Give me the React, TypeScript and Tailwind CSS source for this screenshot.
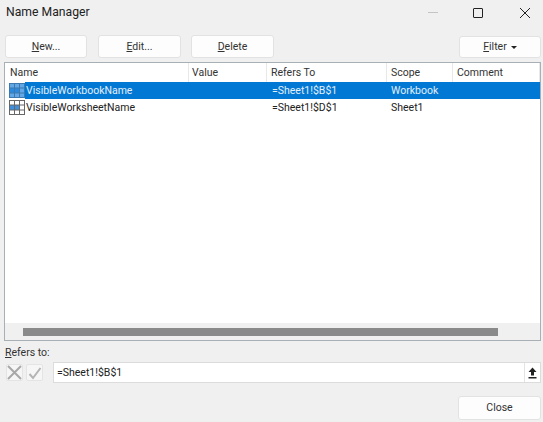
const font = "font-['Roboto',sans-serif]";

function GridIcon({ selected }: { selected?: boolean }) {
  const line = selected ? "#3f78ad" : "#666666";
  return (
    <svg width="16" height="15" viewBox="0 0 16 15" className="shrink-0">
      <rect x="0.5" y="0.5" width="15" height="14" fill={selected ? "#62a8e6" : "#ffffff"} stroke={line} />
      <rect x="1" y="5" width="10" height="5" fill={selected ? "#2c8ade" : "#3f8fdc"} />
      <path d="M0 5H16M0 10H16M5.5 0V15M10.5 0V15" stroke={line} strokeWidth="1" />
    </svg>
  );
}

function Btn({ children, className }: { children: React.ReactNode; className: string }) {
  return (
    <button className={`flex items-center justify-center rounded-[3px] border border-[#e2e2e2] bg-[#fdfdfd] text-[10.5px] text-[#333] ${className}`}>
      {children}
    </button>
  );
}

const columns = [
  { label: "Name", w: "w-[184px] pl-[5px]" },
  { label: "Value", w: "w-[78px] pl-[3px]" },
  { label: "Refers To", w: "w-[120px] pl-[4px]" },
  { label: "Scope", w: "w-[66px] pl-[4px]" },
  { label: "Comment", w: "flex-1 pl-[4px]" },
];

export default function App() {
  return (
    <div className={`flex h-[422px] w-[543px] flex-col overflow-hidden bg-[#f0f0f0] text-[#222] ${font}`}>
      {/* Title bar */}
      <div className="flex h-[25px] items-center pl-[6px]">
        <span className="text-[12.2px] leading-none">Name Manager</span>
        <div className="ml-auto flex items-center">
          <div className="h-px w-[10px] bg-[#c4c4c4]" />
          <div className="ml-[35px] h-[10px] w-[10px] rounded-[1px] border border-[#222]" />
          <svg width="10" height="10" viewBox="0 0 10 10" className="ml-[37px] mr-[13px]">
            <path d="M0 0L10 10M10 0L0 10" stroke="#222" strokeWidth="1" />
          </svg>
        </div>
      </div>

      {/* Buttons */}
      <div className="mt-[10px] flex h-[23px] pl-[5px] pr-[2px]">
        <Btn className="w-[82px]"><span><u>N</u>ew...</span></Btn>
        <Btn className="ml-[11px] w-[83px]"><span><u>E</u>dit...</span></Btn>
        <Btn className="ml-[10px] w-[83px]"><span><u>D</u>elete</span></Btn>
        <Btn className="ml-auto mt-px w-[82px] gap-[4px]">
          <span><u>F</u>ilter</span>
          <span className="h-0 w-0 border-x-[3px] border-t-[3px] border-x-transparent border-t-[#222]" />
        </Btn>
      </div>

      {/* Names table */}
      <div className="ml-[4px] mr-[2px] mt-[4px] flex h-[279px] w-[537px] flex-col border border-[#a9b0b5] bg-white text-[10.5px]">
        <div className="flex h-[19px] shrink-0 items-center text-[#333]">
          {columns.map((c) => (
            <div key={c.label} className={`flex h-full items-center border-r border-[#e8e8e8] pt-px ${c.w}`}>
              {c.label}
            </div>
          ))}
        </div>
        <div className="flex h-[17px] shrink-0 items-center pl-[4px]">
          <GridIcon selected />
          <div className="flex h-full flex-1 items-center bg-[#0078d4] pl-px text-[#e3effa]">
            <span className="w-[246px]">VisibleWorkbookName</span>
            <span className="w-[119px]">=Sheet1!$B$1</span>
            <span>Workbook</span>
          </div>
        </div>
        <div className="flex h-[17px] shrink-0 items-center pl-[4px]">
          <GridIcon />
          <div className="flex h-full flex-1 items-center pl-px text-[#222]">
            <span className="w-[246px]">VisibleWorksheetName</span>
            <span className="w-[119px]">=Sheet1!$D$1</span>
            <span>Sheet1</span>
          </div>
        </div>
        <div className="flex-1" />
        <div className="flex h-[17px] shrink-0 items-center bg-[#f0f0f0] pl-[18px]">
          <div className="h-[8px] w-[475px] bg-[#8a8a8a]" />
        </div>
      </div>

      {/* Refers to */}
      <div className="ml-[5px] mt-[4px] text-[10.5px] leading-[16px] text-[#333]"><u>R</u>efers to:</div>
      <div className="mt-px flex h-[21px] items-center pl-[6px] pr-[2px]">
        <div className="flex h-[17px] w-[17px] items-center justify-center rounded-[2px] border border-[#e4e4e4] bg-[#f6f6f6]">
          <svg width="15" height="15" viewBox="0 0 15 15">
            <path d="M1 1L14 14M14 1L1 14" stroke="#a8a8a8" strokeWidth="2" />
          </svg>
        </div>
        <div className="ml-[3px] flex h-[17px] w-[17px] items-center justify-center rounded-[2px] border border-[#e4e4e4] bg-[#f6f6f6]">
          <svg width="14" height="14" viewBox="0 0 14 14">
            <path d="M1.5 8L5 12L12.5 2" fill="none" stroke="#b4b4b4" strokeWidth="2" />
          </svg>
        </div>
        <div className="ml-[10px] flex h-full flex-1 items-center border border-[#dcdcdc] bg-white pl-[3px] text-[10.5px]">
          =Sheet1!$B$1
          <div className="ml-auto flex h-full w-[16px] items-center justify-center border-l border-[#e4e4e4]">
            <svg width="9" height="12" viewBox="0 0 9 12">
              <path d="M4.5 0.5L8.5 5H6V8.5H3V5H0.5Z" fill="#222" />
              <rect x="0.5" y="10" width="8" height="1.5" fill="#222" />
            </svg>
          </div>
        </div>
      </div>

      {/* Footer */}
      <div className="mt-[13px] flex pr-[2px]">
        <Btn className="ml-auto h-[24px] w-[83px]">Close</Btn>
      </div>
    </div>
  );
}
